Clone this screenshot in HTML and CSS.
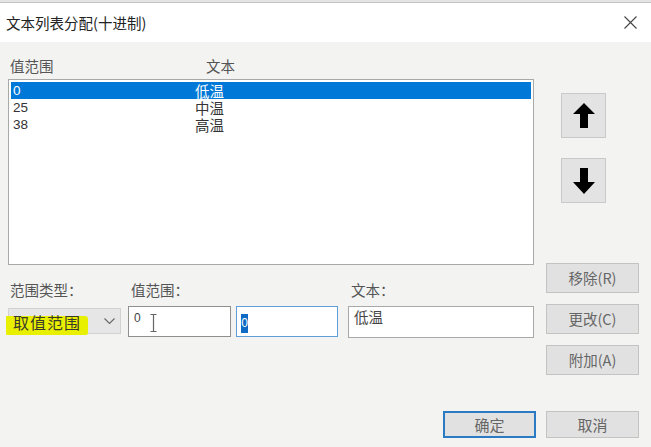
FILE: index.html
```html
<!DOCTYPE html>
<html lang="zh-CN">
<head>
<meta charset="utf-8">
<title>文本列表分配(十进制)</title>
<link rel="stylesheet" href="styles.css">
</head>
<body>
<div class="window">
  <div class="topedge"></div>
  <div class="titlebar">
    <span class="title">文本列表分配(十进制)</span>
    <span class="close"><svg width="13" height="13" viewBox="0 0 13 13"><path d="M0.5 0.5 L12.5 12.5 M12.5 0.5 L0.5 12.5" stroke="#444" stroke-width="1.1" fill="none"/></svg></span>
  </div>
  <div class="content">
    <div class="main">
      <div class="left">
        <div class="heads"><span class="h1">值范围</span><span class="h2">文本</span></div>
        <div class="list">
          <div class="row sel"><span class="c1">0</span><span class="c2">低温</span></div>
          <div class="row"><span class="c1">25</span><span class="c2">中温</span></div>
          <div class="row"><span class="c1">38</span><span class="c2">高温</span></div>
        </div>
        <div class="form">
          <div class="fcol ftype">
            <div class="lbl">范围类型：</div>
            <div class="combo">
              <span class="combotext">取值范围</span>
              <svg class="chev" width="11" height="6" viewBox="0 0 11 6"><polyline points="0.5,0.5 5.5,5.5 10.5,0.5" fill="none" stroke="#666" stroke-width="1.1"/></svg>
            </div>
          </div>
          <div class="fcol frange">
            <div class="lbl">值范围：</div>
            <div class="edits">
              <div class="edit e1"><span class="num">0</span><svg class="ibeam" width="7" height="18" viewBox="0 0 7 18"><path d="M0.5 0.5 H6.5 M3.5 0.5 V17.5 M0.5 17.5 H6.5" stroke="#666" stroke-width="1.2" fill="none"/></svg></div>
              <div class="edit e2 focus"><span class="seltext">0</span></div>
            </div>
          </div>
          <div class="fcol ftext">
            <div class="lbl">文本：</div>
            <div class="edit e3">低温</div>
          </div>
        </div>
      </div>
      <div class="right">
        <button class="arrow up"><svg width="22" height="25" viewBox="0 0 22 25"><polygon points="11,0 22,11 15,11 15,25 7,25 7,11 0,11" fill="#000"/></svg></button>
        <button class="arrow down"><svg width="22" height="26" viewBox="0 0 22 26"><polygon points="7,0 15,0 15,14 22,14 11,26 0,14 7,14" fill="#000"/></svg></button>
        <button class="btn first">移除(R)</button>
        <button class="btn">更改(C)</button>
        <button class="btn">附加(A)</button>
      </div>
    </div>
    <div class="footer">
      <button class="btn ok">确定</button>
      <button class="btn">取消</button>
    </div>
  </div>
</div>
</body>
</html>
```
FILE: styles.css
```css
* { box-sizing: border-box; }
html, body { margin: 0; padding: 0; }
body {
  width: 651px;
  height: 447px;
  overflow: hidden;
  background: #f3f3f2;
  font-family: "Noto Sans CJK SC", "Noto Sans", sans-serif;
  color: #333;
}
.window { width: 651px; height: 447px; background: #f3f3f2; }
.topedge {
  height: 3px;
  background: #e4e4e4;
  border-bottom: 1px solid #c4c4c4;
}
.titlebar {
  height: 39px;
  background: #ffffff;
  display: flex;
  align-items: center;
  justify-content: space-between;
  padding: 0 14px 0 6px;
}
.title { font-size: 14.5px; color: #222; line-height: 20px; }
.close { display: flex; width: 13px; height: 13px; }
.content { padding: 16px 12px 0 8px; }
.main { display: flex; gap: 12px; }
.left { width: 526px; display: flex; flex-direction: column; }
.heads {
  height: 21px;
  display: flex;
  font-size: 14.5px;
  line-height: 16px;
  color: #555;
  padding-left: 2px;
}
.h1 { width: 196px; }
.list {
  height: 186px;
  background: #fff;
  border: 1px solid #a9a9a9;
  padding: 2px 2px 0 2px;
}
.row {
  height: 17px;
  display: flex;
  align-items: center;
  padding-left: 2px;
  color: #333;
}
.row.sel { background: #0078d7; color: #fff; }
.c1 { width: 182px; font-family: "Liberation Sans", sans-serif; font-size: 13.5px; line-height: 17px; }
.c2 { font-size: 14.5px; line-height: 17px; }
.form { display: flex; margin-top: 17px; }
.fcol { display: flex; flex-direction: column; }
.lbl {
  height: 24px;
  font-size: 14.5px;
  line-height: 16px;
  color: #555;
  padding-left: 2px;
}
.ftype { width: 114px; margin-right: 7px; }
.frange { width: 210px; margin-right: 10px; }
.ftext { width: 186px; }
.frange .lbl { padding-left: 3px; }
.ftext .lbl { padding-left: 3px; }
.combo {
  position: relative;
  margin-top: 2px;
  height: 26px;
  background: #e6e6e6;
  border: 1px solid #d2d2d2;
  display: flex;
  align-items: center;
  justify-content: space-between;
  padding: 2px 4px 0 4px;
}
.combo::before {
  content: "";
  position: absolute;
  left: -3px;
  top: 7px;
  width: 82px;
  height: 19px;
  background: #e8f000;
  border-radius: 1px 3px 2px 1px;
}
.combotext {
  position: relative;
  font-size: 16px;
  letter-spacing: 1px;
  line-height: 20px;
  color: #3a3a2a;
}
.chev { position: relative; margin-right: 1px; margin-top: -2px; }
.edits { display: flex; gap: 5px; }
.edit {
  height: 31px;
  background: #fff;
  border: 1px solid #8f8f8f;
}
.e1 { width: 103px; display: flex; align-items: flex-start; padding: 5px 0 0 5px; }
.num { font-family: "Liberation Sans", sans-serif; font-size: 12px; line-height: 13px; color: #444; }
.ibeam { margin-left: 9px; margin-top: 2px; }
.e2 { width: 102px; border-color: #5f9ed8; padding: 1px 0 0 4px; }
.seltext {
  display: inline-block;
  width: 7px;
  height: 19px;
  background: #0f6bc4;
  color: #fff;
  font-family: "Liberation Sans", sans-serif;
  font-size: 12px;
  line-height: 19px;
  text-align: center;
}
.e3 {
  width: 186px;
  height: 32px;
  border-color: #a8a8a8;
  font-size: 14.5px;
  line-height: 20px;
  padding: 0 0 0 5px;
  color: #444;
}
.right { width: 93px; display: flex; flex-direction: column; }
button {
  font-family: "Noto Sans CJK SC", "Noto Sans", sans-serif;
  margin: 0;
  padding: 0;
}
.arrow {
  width: 45px;
  height: 45px;
  margin-left: 15px;
  background: #e3e3e3;
  border: 1px solid #c9c9c9;
  display: flex;
  align-items: center;
  justify-content: center;
}
.arrow.up { margin-top: 35px; }
.arrow.down { margin-top: 20px; }
.btn {
  width: 93px;
  height: 30px;
  background: #e1e1e1;
  border: 1px solid #c3c3c3;
  color: #666;
  font-size: 14.5px;
  line-height: 20px;
  margin-top: 11px;
}
.btn.first { margin-top: 60px; }
.footer {
  display: flex;
  justify-content: flex-end;
  gap: 10px;
  margin-top: 25px;
}
.footer .btn { height: 27px; font-size: 15px; }
.btn.ok { border: 2px solid #2b7bc4; }
```
